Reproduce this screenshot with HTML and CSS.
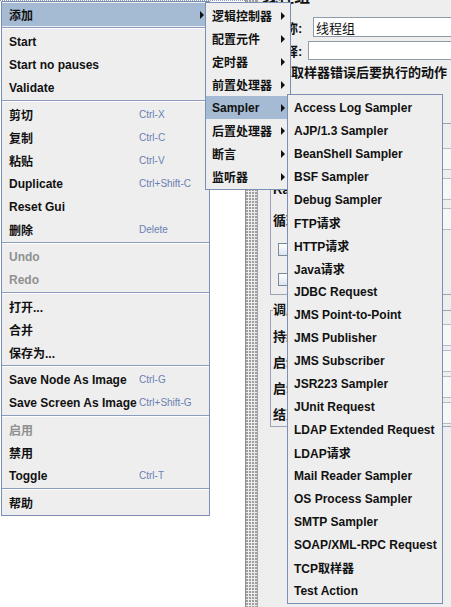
FILE: index.html
```html
<!DOCTYPE html>
<html lang="zh-CN">
<head>
<meta charset="utf-8">
<title>JMeter - 线程组</title>
<link rel="stylesheet" href="styles.css">
</head>
<body>
<div class="app">
  <div class="tree"></div>
  <div class="splitter"></div>
  <div class="panel">
    <div class="title">线程组</div>
    <div class="row name"><span class="lbl-name">名称:</span><div class="field">线程组</div></div>
    <div class="row comment"><span class="lbl-comment">注释:</span><div class="field"></div></div>
    <div class="caption">在取样器错误后要执行的动作</div>
    <div class="radios">
      <span class="radio"></span>继续 <span class="radio"></span>启动下一进程循环
    </div>
    <fieldset class="group g1">
      <legend>线程属性</legend>
      <div class="frow"><span class="lbl">线程数:</span><div class="field">1</div></div>
      <div class="frow"><span class="lbl">Ramp-Up Period (in seconds):</span><div class="field">1</div></div>
      <div class="frow"><span class="lbl">循环次数</span><span class="cb"></span><span class="lbl">永远</span><div class="field">1</div></div>
      <div class="frow"><span class="cb"></span><span class="lbl">Delay Thread creation until needed</span></div>
      <div class="frow"><span class="cb"></span><span class="lbl">调度器</span></div>
    </fieldset>
    <fieldset class="group g2">
      <legend>调度器配置</legend>
      <div class="frow"><span class="lbl">持续时间（秒）</span><div class="field"></div></div>
      <div class="frow"><span class="lbl">启动延迟（秒）</span><div class="field"></div></div>
      <div class="frow"><span class="lbl">启动时间</span><div class="field"></div></div>
      <div class="frow"><span class="lbl">结束时间</span><div class="field"></div></div>
    </fieldset>
  </div>
</div>

<div class="menu main">
  <div class="item sel"><span class="lab">添加</span><span class="arrow"></span></div>
  <div class="sep"></div>
  <div class="item"><span class="lab">Start</span></div>
  <div class="item"><span class="lab">Start no pauses</span></div>
  <div class="item"><span class="lab">Validate</span></div>
  <div class="sep"></div>
  <div class="item"><span class="lab">剪切</span><span class="acc">Ctrl-X</span></div>
  <div class="item"><span class="lab">复制</span><span class="acc">Ctrl-C</span></div>
  <div class="item"><span class="lab">粘贴</span><span class="acc">Ctrl-V</span></div>
  <div class="item"><span class="lab">Duplicate</span><span class="acc">Ctrl+Shift-C</span></div>
  <div class="item"><span class="lab">Reset Gui</span></div>
  <div class="item"><span class="lab">删除</span><span class="acc">Delete</span></div>
  <div class="sep"></div>
  <div class="item dis"><span class="lab">Undo</span></div>
  <div class="item dis"><span class="lab">Redo</span></div>
  <div class="sep"></div>
  <div class="item"><span class="lab">打开...</span></div>
  <div class="item"><span class="lab">合并</span></div>
  <div class="item"><span class="lab">保存为...</span></div>
  <div class="sep"></div>
  <div class="item"><span class="lab">Save Node As Image</span><span class="acc">Ctrl-G</span></div>
  <div class="item"><span class="lab">Save Screen As Image</span><span class="acc">Ctrl+Shift-G</span></div>
  <div class="sep"></div>
  <div class="item dis"><span class="lab">启用</span></div>
  <div class="item"><span class="lab">禁用</span></div>
  <div class="item"><span class="lab">Toggle</span><span class="acc">Ctrl-T</span></div>
  <div class="sep"></div>
  <div class="item"><span class="lab">帮助</span></div>
</div>

<div class="menu sub1">
  <div class="item"><span>逻辑控制器</span><span class="arrow"></span></div>
  <div class="item"><span>配置元件</span><span class="arrow"></span></div>
  <div class="item"><span>定时器</span><span class="arrow"></span></div>
  <div class="item"><span>前置处理器</span><span class="arrow"></span></div>
  <div class="item sel"><span>Sampler</span><span class="arrow"></span></div>
  <div class="item"><span>后置处理器</span><span class="arrow"></span></div>
  <div class="item"><span>断言</span><span class="arrow"></span></div>
  <div class="item"><span>监听器</span><span class="arrow"></span></div>
</div>

<div class="menu sub2">
  <div class="item">Access Log Sampler</div>
  <div class="item">AJP/1.3 Sampler</div>
  <div class="item">BeanShell Sampler</div>
  <div class="item">BSF Sampler</div>
  <div class="item">Debug Sampler</div>
  <div class="item">FTP请求</div>
  <div class="item">HTTP请求</div>
  <div class="item">Java请求</div>
  <div class="item">JDBC Request</div>
  <div class="item">JMS Point-to-Point</div>
  <div class="item">JMS Publisher</div>
  <div class="item">JMS Subscriber</div>
  <div class="item">JSR223 Sampler</div>
  <div class="item">JUnit Request</div>
  <div class="item">LDAP Extended Request</div>
  <div class="item">LDAP请求</div>
  <div class="item">Mail Reader Sampler</div>
  <div class="item">OS Process Sampler</div>
  <div class="item">SMTP Sampler</div>
  <div class="item">SOAP/XML-RPC Request</div>
  <div class="item">TCP取样器</div>
  <div class="item">Test Action</div>
</div>
</body>
</html>
```

FILE: styles.css
```css
* { box-sizing: border-box; }
html, body { margin: 0; padding: 0; }
body {
  width: 451px;
  height: 607px;
  overflow: hidden;
  position: relative;
  background: #eeeeee;
  font-family: "Liberation Sans", "Noto Sans CJK SC", sans-serif;
  color: #111;
}

/* ---------- background window ---------- */
.app { display: flex; height: 607px; }
.tree {
  flex: 0 0 245px;
  background: #ffffff;
  border-top: 1px dotted #8c9cbc;
}
.splitter {
  flex: 0 0 13px;
  border-left: 1px solid #8f8f8f;
  border-right: 1px solid #a4a4a4;
  background-color: #ececec;
  background-image: radial-gradient(circle at 1px 1px, #9c9c9c 0.7px, transparent 0.9px);
  background-size: 3px 3px;
}
.panel {
  flex: 1;
  min-width: 0;
  background: #eeeeee;
  padding-left: 4px;
  overflow: hidden;
  font-size: 13px;
  font-weight: bold;
  white-space: nowrap;
}
.title {
  height: 5px;
  overflow: hidden;
  display: flex;
  align-items: flex-end;
  font-size: 16px;
  line-height: 16px;
}
.row { display: flex; align-items: center; margin-left: 10px; }
.name { margin-top: 12px; height: 20px; }
.comment { margin-top: 4px; height: 19px; }
.lbl-name { flex: 0 0 41px; }
.lbl-comment { flex: 0 0 36px; }
.field {
  flex: 1;
  height: 100%;
  background: #ffffff;
  border: 1px solid #8e9bab;
  font-weight: normal;
  padding-left: 2px;
  display: flex;
  align-items: center;
  white-space: nowrap;
}
.row .field { margin-right: -4px; }
.caption { margin: 5px 0 0 16px; line-height: 16px; }
.radios {
  height: 34px;
  padding: 16px 0 0 14px;
  display: flex;
  align-items: center;
  gap: 4px;
  font-size: 12px;
}
.radio {
  width: 12px;
  height: 12px;
  border-radius: 50%;
  border: 1px solid #7a8a99;
  background: #fff;
}

fieldset.group {
  margin: 0 -12px 0 8px;
  padding: 13px 0 0 2px;
  border: 1px solid #9aa5b6;
  min-width: 0;
}
fieldset.group legend { padding: 0; line-height: 16px; }
.g2 { margin-top: 7px !important; padding-top: 4px !important; }
.frow {
  height: 30px;
  display: flex;
  align-items: center;
  overflow: hidden;
}
.g2 .frow { height: 26px; }
.frow .lbl { flex: 0 1 auto; max-width: 140px; overflow: hidden; }
.frow .field {
  flex: 0 0 130px;
  height: 22px;
  margin-left: auto;
  background: #f7f7f7;
  border-color: #b4bcc8;
}
.cb {
  flex: none;
  width: 13px;
  height: 13px;
  margin: 0 4px 0 5px;
  border: 1px solid #7a8a99;
  background: linear-gradient(#ffffff, #dfe5ec);
}

/* ---------- popup menus ---------- */
.menu {
  position: absolute;
  background: #eeeeee;
  border: 1px solid #7b8fb4;
  padding: 1px 0;
  font-size: 12px;
  font-weight: bold;
  color: #111;
  z-index: 1;
}
.main { left: 1px; top: 1px; width: 209px; }
.sub1 { left: 205px; top: 2px; width: 86px; z-index: 2; }
.sub2 { left: 287px; top: 94px; width: 156px; z-index: 3; }

.item {
  height: 23px;
  display: flex;
  align-items: center;
  padding-left: 7px;
  white-space: nowrap;
}
.sub1 .item, .sub2 .item { padding-left: 6px; }
.item.sel { background: #a5bad3; }
.item.dis { color: #909090; }
.lab { flex: 0 0 130px; }
.acc {
  font-size: 10px;
  font-weight: normal;
  color: #6b80b2;
}
.arrow {
  margin-left: auto;
  margin-right: 5px;
  width: 0;
  height: 0;
  border-left: 4px solid #111;
  border-top: 4px solid transparent;
  border-bottom: 4px solid transparent;
}
.sep { height: 4px; padding-top: 1px; }
.sep::before {
  content: "";
  display: block;
  height: 1px;
  background: #8b9dbc;
  box-shadow: 0 1px 0 #ffffff;
}
```
